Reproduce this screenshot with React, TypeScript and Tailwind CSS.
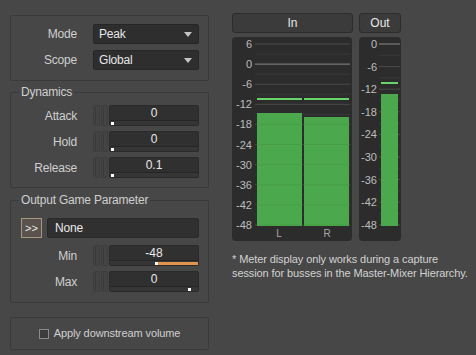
const FONT = '"Liberation Sans", Arial, sans-serif'

function Dropdown({ value }: { value: string }) {
  return (
    <div className="flex h-[20px] w-[106px] items-center justify-between rounded-[2px] border border-[#262626] bg-[#2e2e2e] pl-[5px] pr-[6px] text-[12px] tracking-[-0.2px] text-[#e6e6e6]">
      <span>{value}</span>
      <svg width="8" height="5" viewBox="0 0 8 5" aria-hidden>
        <path d="M0 0h8L4 5z" fill="#c4c4c4" />
      </svg>
    </div>
  )
}

function Handles() {
  return (
    <div className="flex h-full w-[15px] gap-[1px]">
      {[0, 1].map((i) => (
        <div key={i} className="flex h-full flex-1 items-stretch rounded-[2px] border border-[#3d3d3d] bg-[#444] p-[1px]">
          <div className="flex-1 rounded-[1px] border-l border-[#3a3a3a]" />
        </div>
      ))}
    </div>
  )
}

function SpinField({ value, track }: { value: string; track: 'left' | 'min' | 'right' }) {
  return (
    <div className="flex h-[21px] w-[106px] gap-[1px]">
      <Handles />
      <div className="flex flex-1 flex-col rounded-[2px] border border-[#2a2a2a] bg-[#303030]">
        <div className="flex h-[14px] items-center justify-center text-[12px] leading-none text-[#e8e8e8]">{value}</div>
        <div className="h-[1px] bg-[#262626]" />
        <div className="relative flex-1 bg-[#363636]">
          {track === 'left' && <span className="absolute bottom-[0px] left-[1px] h-[3px] w-[3px] bg-white" />}
          {track === 'min' && (
            <>
              <span className="absolute bottom-[0px] left-[45px] right-0 h-[3px] bg-[#e0944d]" />
              <span className="absolute bottom-[0px] left-[45px] h-[3px] w-[3px] bg-white" />
            </>
          )}
          {track === 'right' && <span className="absolute bottom-[0px] left-[78px] h-[3px] w-[3px] bg-white" />}
        </div>
      </div>
    </div>
  )
}

function Row({ label, children }: { label: string; children: React.ReactNode }) {
  return (
    <div className="flex items-center">
      <span className="w-[66px] text-right text-[12px] tracking-[-0.2px] text-[#cfcfcf]">{label}</span>
      <div className="ml-[16px]">{children}</div>
    </div>
  )
}

function InMeter() {
  const labels = ['6', '0', '-6', '-12', '-18', '-24', '-30', '-36', '-42', '-48']
  const step = 20.11
  const y = (i: number) => 7 + i * step
  return (
    <svg width="120" height="204" viewBox="0 0 120 204" style={{ fontFamily: FONT }}>
      {labels.slice(0, -1).map((_, i) => (
        <line key={'m' + i} x1="23" x2="118" y1={y(i) + step / 2} y2={y(i) + step / 2} stroke="#393939" />
      ))}
      {labels.map((l, i) => (
        <line key={'l' + i} x1="23" x2="118" y1={y(i)} y2={y(i)} stroke={l === '0' ? '#8a8a8a' : '#4a4a4a'} />
      ))}
      <rect x="25" y="76" width="45" height="113" fill="#4ca84c" />
      <rect x="72" y="80" width="45" height="109" fill="#4ca84c" />
      {labels.map((_, i) => (
        <line key={'o' + i} x1="25" x2="117" y1={y(i)} y2={y(i)} stroke="#000" strokeOpacity={y(i) > 80 ? 0.06 : 0} />
      ))}
      <rect x="25" y="61" width="45" height="2" fill="#66d466" />
      <rect x="72" y="61" width="45" height="2" fill="#66d466" />
      {labels.map((l, i) => (
        <text key={l} x="20" y={y(i) + 4} textAnchor="end" fontSize="11" fill="#bdbdbd">
          {l}
        </text>
      ))}
      <text x="47" y="200" textAnchor="middle" fontSize="10" fill="#a8a8a8">L</text>
      <text x="95" y="200" textAnchor="middle" fontSize="10" fill="#a8a8a8">R</text>
    </svg>
  )
}

function OutMeter() {
  const labels = ['0', '-6', '-12', '-18', '-24', '-30', '-36', '-42', '-48']
  const step = 22.6
  const y = (i: number) => 7 + i * step
  return (
    <svg width="42" height="204" viewBox="0 0 42 204" style={{ fontFamily: FONT }}>
      {labels.slice(0, -1).map((_, i) => (
        <line key={'m' + i} x1="20" x2="41" y1={y(i) + step / 2} y2={y(i) + step / 2} stroke="#393939" />
      ))}
      {labels.map((l, i) => (
        <line key={'l' + i} x1="20" x2="41" y1={y(i)} y2={y(i)} stroke={l === '0' ? '#8a8a8a' : '#4a4a4a'} />
      ))}
      <rect x="22" y="57" width="17" height="132" fill="#4ca84c" />
      <rect x="22" y="45" width="17" height="2" fill="#66d466" />
      {labels.map((l, i) => (
        <text key={l} x="18" y={y(i) + 4} textAnchor="end" fontSize="11" fill="#bdbdbd">
          {l}
        </text>
      ))}
    </svg>
  )
}

export default function App() {
  return (
    <div className="flex h-[355px] w-[476px] overflow-hidden bg-[#474747] text-[#cfcfcf]" style={{ fontFamily: FONT }}>
      <div className="ml-[10px] flex w-[199px] shrink-0 flex-col">
        <div className="mt-[15px] flex h-[66px] flex-col gap-[6px] rounded-[2px] border border-[#3a3a3a] pt-[8px]">
          <Row label="Mode">
            <Dropdown value="Peak" />
          </Row>
          <Row label="Scope">
            <Dropdown value="Global" />
          </Row>
        </div>

        <fieldset className="mt-[4px] rounded-[2px] border border-[#3a3a3a] pb-[9px]">
          <legend className="ml-[8px] px-[2px] text-[12px] leading-[14px] tracking-[-0.2px] text-[#cfcfcf]">Dynamics</legend>
          <div className="flex flex-col gap-[5px] pt-[6px]">
            <Row label="Attack">
              <SpinField value="0" track="left" />
            </Row>
            <Row label="Hold">
              <SpinField value="0" track="left" />
            </Row>
            <Row label="Release">
              <SpinField value="0.1" track="left" />
            </Row>
          </div>
        </fieldset>

        <fieldset className="mt-[5px] rounded-[2px] border border-[#3a3a3a] pb-[10px]">
          <legend className="ml-[8px] px-[2px] text-[12px] leading-[14px] tracking-[-0.2px] text-[#cfcfcf]">Output Game Parameter</legend>
          <div className="flex flex-col pt-[11px]">
            <div className="ml-[10px] flex h-[20px] items-center gap-[5px]">
              <div className="flex h-[20px] w-[21px] items-center justify-center border border-[#a89580] bg-[#5a534d] text-[11px] text-[#eeeeee]">
                &gt;&gt;
              </div>
              <div className="flex h-[20px] w-[152px] items-center rounded-[2px] border border-[#2a2a2a] bg-[#303030] pl-[7px] text-[12px] tracking-[-0.2px] text-[#e8e8e8]">
                None
              </div>
            </div>
            <div className="mt-[7px]">
              <Row label="Min">
                <SpinField value="-48" track="min" />
              </Row>
            </div>
            <div className="mt-[5px]">
              <Row label="Max">
                <SpinField value="0" track="right" />
              </Row>
            </div>
          </div>
        </fieldset>

        <div className="mt-[14px] flex h-[33px] items-center justify-center gap-[5px] rounded-[2px] border border-[#3a3a3a]">
          <span className="h-[10px] w-[10px] border border-[#8a8a8a] bg-[#3c3c3c]" />
          <span className="text-[11px] tracking-[-0.1px] text-[#cfcfcf]">Apply downstream volume</span>
        </div>
      </div>

      <div className="ml-[23px] flex w-[244px] shrink-0 flex-col pt-[13px]">
        <div className="flex gap-[6px]">
          <div className="flex w-[121px] flex-col gap-[4px]">
            <div className="flex h-[20px] items-center justify-center rounded-[3px] border border-[#2c2c2c] bg-[#3b3b3b] text-[12px] text-[#e6e6e6]">
              In
            </div>
            <div className="h-[204px] w-[120px] overflow-hidden rounded-[4px] bg-[#2c2c2c]">
              <InMeter />
            </div>
          </div>
          <div className="flex w-[42px] flex-col gap-[4px]">
            <div className="flex h-[20px] items-center justify-center rounded-[3px] border border-[#2c2c2c] bg-[#3b3b3b] text-[12px] text-[#e6e6e6]">
              Out
            </div>
            <div className="h-[204px] w-[42px] overflow-hidden rounded-[4px] bg-[#2c2c2c]">
              <OutMeter />
            </div>
          </div>
        </div>
        <p className="mt-[11px] whitespace-nowrap text-[11px] leading-[14px] tracking-[-0.1px] text-[#d2d2d2]">
          * Meter display only works during a capture
          <br />
          session for busses in the Master-Mixer Hierarchy.
        </p>
      </div>
    </div>
  )
}
